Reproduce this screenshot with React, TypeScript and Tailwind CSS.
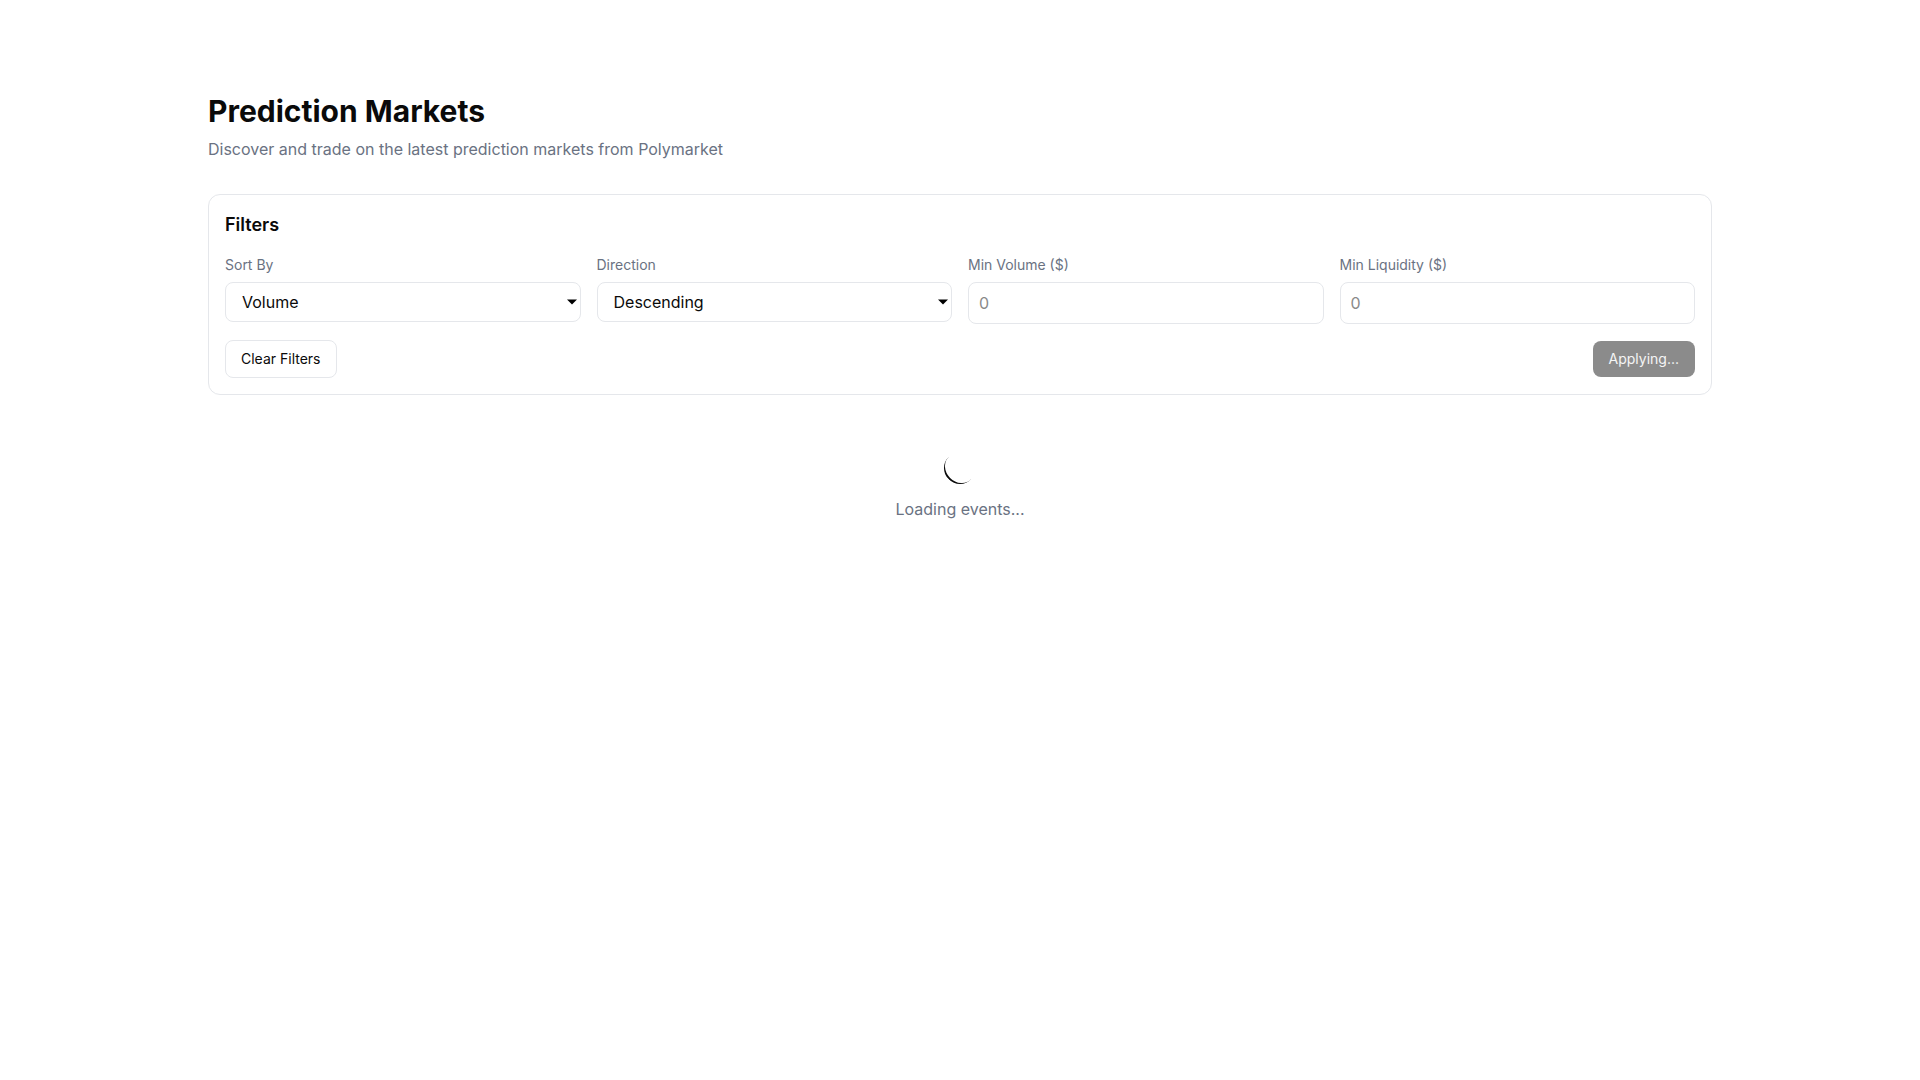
import React from "react";

function Caret() {
  return (
    <svg
      className="pointer-events-none absolute right-1 top-1/2 -translate-y-1/2"
      width="10"
      height="6"
      viewBox="0 0 10 6"
    >
      <path d="M0 0.5 H10 L5 5.5 Z" fill="#000" />
    </svg>
  );
}

export default function App() {
  return (
    <div className="min-h-screen bg-white text-gray-900 antialiased" style={{ fontFamily: "Inter, 'Noto Sans', sans-serif" }}>
      <div className="container mx-auto px-4 pt-[93px]">
        <h1 className="text-3xl font-bold text-[#0a0a0a]">Prediction Markets</h1>
        <p className="mt-2 text-base text-gray-500">
          Discover and trade on the latest prediction markets from Polymarket
        </p>

        <div className="mt-[33px] rounded-xl border border-gray-200 bg-white p-4">
          <h2 className="text-lg font-semibold text-[#0a0a0a] mb-4">Filters</h2>
          <div className="grid grid-cols-4 gap-4">
            <div>
              <label className="block text-sm text-gray-500 mb-[7px]">Sort By</label>
              <div className="relative">
                <select className="w-full h-10 appearance-none rounded-lg border border-gray-200 bg-white pl-4 pr-6 text-base text-[#0a0a0a]" defaultValue="volume">
                  <option value="volume">Volume</option>
                  <option value="liquidity">Liquidity</option>
                </select>
                <Caret />
              </div>
            </div>
            <div>
              <label className="block text-sm text-gray-500 mb-[7px]">Direction</label>
              <div className="relative">
                <select className="w-full h-10 appearance-none rounded-lg border border-gray-200 bg-white pl-4 pr-6 text-base text-[#0a0a0a]" defaultValue="desc">
                  <option value="desc">Descending</option>
                  <option value="asc">Ascending</option>
                </select>
                <Caret />
              </div>
            </div>
            <div>
              <label className="block text-sm text-gray-500 mb-[7px]">Min Volume ($)</label>
              <input
                type="number"
                placeholder="0"
                className="w-full h-[42px] rounded-lg border border-gray-200 bg-white px-2.5 text-base text-[#0a0a0a] placeholder:text-[#8a8a8a]"
              />
            </div>
            <div>
              <label className="block text-sm text-gray-500 mb-[7px]">Min Liquidity ($)</label>
              <input
                type="number"
                placeholder="0"
                className="w-full h-[42px] rounded-lg border border-gray-200 bg-white px-2.5 text-base text-[#0a0a0a] placeholder:text-[#8a8a8a]"
              />
            </div>
          </div>
          <div className="mt-4 flex items-center justify-between">
            <button className="rounded-lg border border-gray-200 bg-white px-[15px] py-2 text-sm text-[#0a0a0a]">
              Clear Filters
            </button>
            <button className="rounded-lg bg-[#8b8b8b] px-4 py-2 text-sm text-[#f5f5f5]">
              Applying...
            </button>
          </div>
        </div>

        <div className="mt-[57px] flex flex-col items-center">
          <div className="h-8 w-8 rounded-full border-b-2 border-[#0a0a0a] rotate-[45deg]" />
          <p className="mt-[13px] text-base text-gray-500">Loading events...</p>
        </div>
      </div>
    </div>
  );
}
